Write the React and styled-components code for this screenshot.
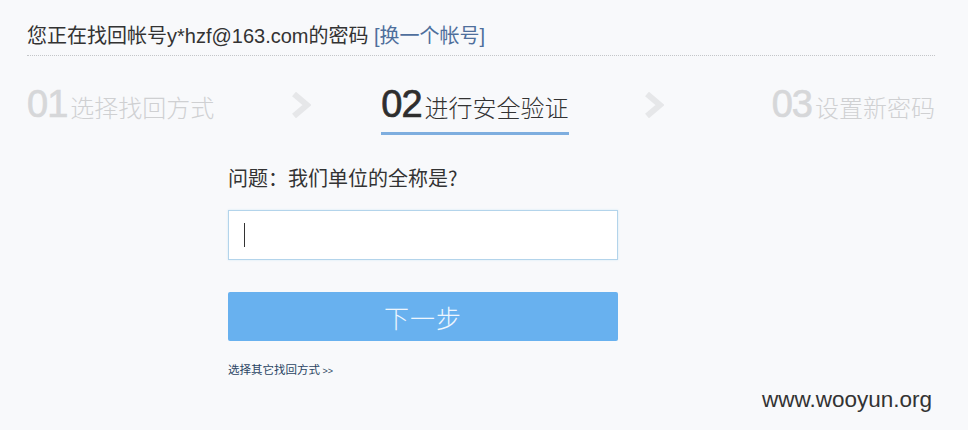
import styled, { createGlobalStyle } from 'styled-components';

const GlobalStyle = createGlobalStyle`
  html, body {
    margin: 0;
    padding: 0;
    background: #f8f9fb;
  }
  body {
    font-family: "Liberation Sans", "Noto Sans CJK SC", sans-serif;
    color: #333;
  }
`;

const steps = [
  { num: '01', label: '选择找回方式' },
  { num: '02', label: '进行安全验证', active: true },
  { num: '03', label: '设置新密码' },
];

function Chevron({ gap }) {
  return (
    <ArrowIcon $gap={gap} width="20" height="26" viewBox="0 0 20 26">
      <polyline points="3,2 16,13 3,24" fill="none" stroke="#e6e7e9" strokeWidth="6" />
    </ArrowIcon>
  );
}

function App() {
  return (
    <>
      <GlobalStyle />
      <Page>
        <Header>
          您正在找回帐号<Account>y*hzf@163.com</Account>的密码 <SwitchLink>[换一个帐号]</SwitchLink>
        </Header>

        <StepRow>
          <Step>
            <StepNum>{steps[0].num}</StepNum>
            <StepLabel>{steps[0].label}</StepLabel>
          </Step>
          <Chevron gap={77} />
          <Step $active>
            <StepNum $active>{steps[1].num}</StepNum>
            <StepLabel $active>{steps[1].label}</StepLabel>
          </Step>
          <Chevron gap={75} />
          <Step $last>
            <StepNum>{steps[2].num}</StepNum>
            <StepLabel>{steps[2].label}</StepLabel>
          </Step>
        </StepRow>

        <Form>
          <Question>问题：我们单位的全称是?</Question>
          <InputBox>
            <Caret />
          </InputBox>
          <NextButton>下一步</NextButton>
          <OtherLink>选择其它找回方式 <small>&gt;&gt;</small></OtherLink>
        </Form>

        <Watermark>www.wooyun.org</Watermark>
      </Page>
    </>
  );
}

const Page = styled.div`
  position: relative;
  height: 430px;
  padding: 0 33px 0 27px;
  box-sizing: border-box;
  overflow: hidden;
`;

const Header = styled.div`
  padding-top: 25px;
  height: 22px;
  line-height: 22px;
  font-size: 20px;
  color: #333;
  padding-bottom: 8px;
  border-bottom: 1px dotted #c4c6c9;
  white-space: nowrap;
`;

const Account = styled.span`
  font-size: 20px;
  font-family: "Liberation Sans", Arial, sans-serif;
`;

const SwitchLink = styled.a`
  color: #4f6f9c;
`;

const StepRow = styled.div`
  display: flex;
  align-items: flex-start;
  margin-top: 26px;
  height: 53px;
`;

const Step = styled.div`
  display: flex;
  align-items: baseline;
  height: 44px;
  padding-bottom: 6px;
  border-bottom: 3px solid ${(p) => (p.$active ? '#7eaedf' : 'transparent')};
  margin-left: ${(p) => (p.$active ? '70px' : p.$last ? 'auto' : '0')};
`;

const StepNum = styled.span`
  font-size: 38px;
  line-height: 44px;
  color: ${(p) => (p.$active ? '#2e2e2e' : '#d6d7d9')};
  -webkit-text-stroke: 0.7px ${(p) => (p.$active ? '#2e2e2e' : '#d6d7d9')};
  letter-spacing: -1px;
`;

const StepLabel = styled.span`
  font-family: "Noto Sans CJK SC", sans-serif;
  font-size: 24px;
  font-weight: 300;
  margin-left: 3px;
  color: ${(p) => (p.$active ? '#333' : '#cfd0d2')};
`;

const ArrowIcon = styled.svg`
  margin: 10px 0 0 ${(p) => p.$gap}px;
  flex: none;
`;

const Form = styled.div`
  width: 390px;
  margin-left: 201px;
  display: flex;
  flex-direction: column;
`;

const Question = styled.div`
  font-family: "Noto Sans CJK SC", sans-serif;
  font-size: 20px;
  line-height: 24px;
  margin-top: 31px;
  color: #333;
`;

const InputBox = styled.div`
  margin-top: 20px;
  height: 48px;
  background: #fff;
  border: 1px solid #b3d4eb;
  box-shadow: 0 0 2px #d4e8f6;
  display: flex;
  align-items: center;
  padding-left: 15px;
`;

const Caret = styled.span`
  width: 1px;
  height: 24px;
  background: #333;
`;

const NextButton = styled.button`
  margin-top: 32px;
  height: 49px;
  border: none;
  border-radius: 2px;
  background: #68b1ef;
  color: #eef6fe;
  font-family: "Noto Sans CJK SC", sans-serif;
  font-weight: 300;
  font-size: 25px;
  letter-spacing: 1px;
  padding: 0;
`;

const OtherLink = styled.a`
  margin-top: 20px;
  font-family: "Noto Sans CJK SC", sans-serif;
  font-size: 11.5px;
  color: #2b4563;

  small {
    font-size: 9px;
    font-family: "Liberation Sans", sans-serif;
  }
`;

const Watermark = styled.div`
  position: absolute;
  right: 36px;
  top: 387px;
  font-family: "Liberation Sans", sans-serif;
  font-size: 22.5px;
  color: #333;
`;

export default App;
